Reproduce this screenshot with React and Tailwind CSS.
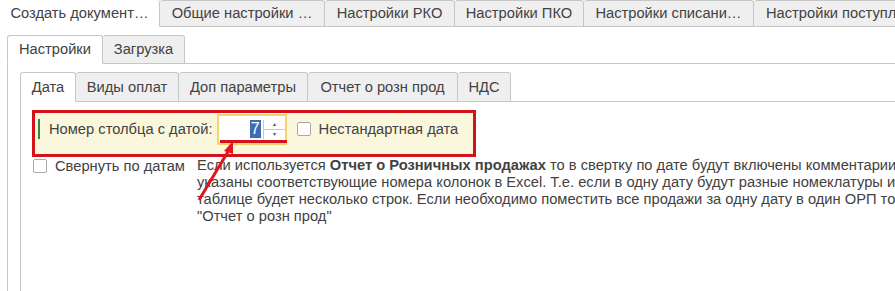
import React from 'react';
import clsx from 'clsx';

const topTabs = [
  { label: 'Создать документ…', w: 'w-[160px]', active: true },
  { label: 'Общие настройки …', w: 'w-[165px]' },
  { label: 'Настройки РКО', w: 'w-[130px]' },
  { label: 'Настройки ПКО', w: 'w-[129px]' },
  { label: 'Настройки списани…', w: 'w-[170px]' },
  { label: 'Настройки поступления', w: 'px-[12px]' },
];

const subTabs = [
  { label: 'Настройки', w: 'w-[96px]', active: true },
  { label: 'Загрузка', w: 'w-[82px]' },
];

const innerTabs = [
  { label: 'Дата', w: 'w-[56px]', active: true },
  { label: 'Виды оплат', w: 'w-[103px]' },
  { label: 'Доп параметры', w: 'w-[129px]' },
  { label: 'Отчет о розн прод', w: 'w-[150px]' },
  { label: 'НДС', w: 'w-[53px]' },
];

// one strip of tabs, filler draws the rest of the bottom line
const TabRow = ({ tabs, height, first }) => (
  <div className={clsx('flex shrink-0', height)}>
    {tabs.map((t, i) => (
      <div
        key={t.label}
        className={clsx(
          'flex items-center justify-center shrink-0 whitespace-nowrap border-t border-r rounded-t-[3px] border-[#c6c6c6]',
          t.w,
          i === 0 && first !== 'open' && 'border-l',
          i === 0 && first === 'open' && 'border-t-0 rounded-none',
          t.active ? 'bg-white border-b border-b-white' : 'bg-[#efefef] border-b'
        )}
      >
        {t.label}
      </div>
    ))}
    <div className="flex-1 border-b border-[#c6c6c6]" />
  </div>
);

const Checkbox = ({ className }) => (
  <div
    className={clsx(
      'w-[14px] h-[14px] shrink-0 border border-[#a8a8a8] rounded-[2px] bg-white',
      className
    )}
  />
);

export default function App() {
  return (
    <div className="relative w-[895px] h-[291px] overflow-hidden bg-white text-[14.7px] text-[#424242] font-['Liberation_Sans',Arial,sans-serif] flex flex-col">
      <TabRow tabs={topTabs} height="h-[27px]" first="open" />

      <div className="flex flex-col flex-1 pt-[8px] pl-[7px]">
        <TabRow tabs={subTabs} height="h-[29px]" />

        <div className="flex flex-col flex-1 border-l border-[#c6c6c6] pl-[12px] pt-[8px]">
          <TabRow tabs={innerTabs} height="h-[30px]" />

          <div className="flex flex-col flex-1 border-l border-[#c6c6c6] pl-[11px] pt-[8px]">
            {/* highlighted group */}
            <div className="w-[444px] h-[47px] border-[3px] border-[#d4121c] bg-[#fbf7dc] flex flex-col">
              <div className="flex items-center h-[32px] pl-[3px]">
                <div className="w-[2px] h-[20px] bg-[#2e8b3a] mr-[9px]" />
                <span className="whitespace-nowrap">Номер столбца с датой:</span>
                <div className="relative ml-[4px] w-[70px] h-[31px] border-2 border-[#f2d472] bg-white flex">
                  <div className="flex-1 flex items-center justify-end pr-[2px]">
                    <span className="bg-[#3d6db5] text-white h-[18px] px-[1px] leading-[18px] text-[16px]">
                      7
                    </span>
                  </div>
                  <div className="w-[22px] my-[4px] border-l border-[#c8c8c8] flex flex-col">
                    <div className="flex-1 flex items-center justify-center text-[6px] leading-none text-[#555]">
                      ▴
                    </div>
                    <div className="border-t border-[#c8c8c8]" />
                    <div className="flex-1 flex items-center justify-center text-[6px] leading-none text-[#555]">
                      ▾
                    </div>
                  </div>
                  <div className="absolute left-[1px] right-[-2px] bottom-[0px] h-[3px] bg-[#d4121c]" />
                </div>
                <Checkbox className="ml-[10px]" />
                <span className="ml-[8px] whitespace-nowrap">Нестандартная дата</span>
              </div>
            </div>

            <div className="flex items-start ml-px leading-[17px]">
              <div className="w-[164px] shrink-0 flex items-start pt-[2px]">
                <Checkbox />
                <span className="ml-[8px] -mt-[1px] whitespace-nowrap">Свернуть по датам</span>
              </div>
              <div className="flex flex-col whitespace-nowrap">
                <span>
                  Если используется <b className="font-bold">Отчет о Розничных продажах</b> то в
                  свертку по дате будут включены комментарии
                </span>
                <span>
                  указаны соответствующие номера колонок в Excel. Т.е. если в одну дату будут
                  разные номеклатуры и
                </span>
                <span>
                  таблице будет несколько строк. Если необходимо поместить все продажи за одну дату
                  в один ОРП то
                </span>
                <span>"Отчет о розн прод"</span>
              </div>
            </div>
          </div>
        </div>
      </div>

      {/* annotation arrow */}
      <svg className="absolute left-0 top-0 pointer-events-none" width="895" height="291">
        <line x1="199" y1="200" x2="229" y2="150" stroke="#e0161e" strokeWidth="3" />
        <polygon points="233,141 224,151 233,154" fill="#e0161e" />
      </svg>
    </div>
  );
}
